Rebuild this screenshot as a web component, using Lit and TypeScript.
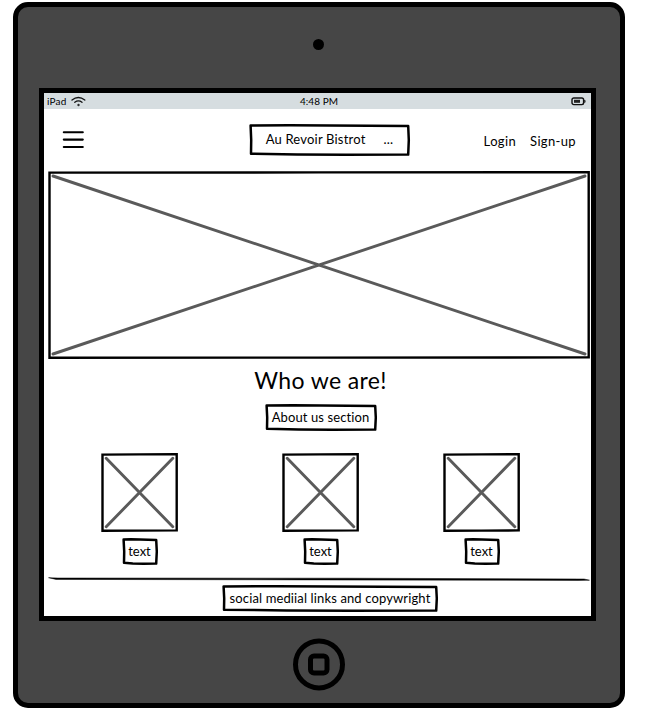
import { LitElement, html, svg, css } from "lit";
import { customElement, property } from "lit/decorators.js";

/** Text inside a hand-drawn, slightly crooked frame. */
@customElement("sketch-label")
class SketchLabel extends LitElement {
  @property({ type: Number }) w = 100;
  @property({ type: Number }) h = 26;

  static styles = css`
    :host { display: block; position: relative; }
    .frame { position: absolute; left: 0; top: 0; display: block; overflow: visible; }
    .content {
      position: relative; display: flex; height: 100%; box-sizing: border-box;
      align-items: center; justify-content: center; padding-bottom: 2px;
    }
  `;

  render() {
    const { w, h } = this;
    const outline = `M1.6 1.6 L${w * 0.25} 1.2 L${w * 0.5} 1.5 L${w - 1.8} 2
      L${w - 1.2} ${h * 0.5} L${w - 1.8} ${h - 1.4}
      L${w * 0.6} ${h - 1.2} L${w * 0.3} ${h - 1.6} L2 ${h - 2.2}
      L2.2 ${h * 0.5} Z`;
    return html`
      <svg class="frame" width=${w} height=${h}>
        <path d=${outline} fill="#fff" stroke="#000" stroke-width="2.5" stroke-linejoin="round" />
      </svg>
      <div class="content"><slot></slot></div>
    `;
  }
}

/** Crossed-out image placeholder. */
@customElement("image-placeholder")
class ImagePlaceholder extends LitElement {
  @property({ type: Number }) w = 77;
  @property({ type: Number }) h = 78;
  @property({ type: Number }) inset = 5;

  static styles = css`
    :host { display: block; }
    svg { display: block; }
  `;

  render() {
    const { w, h, inset: i } = this;
    return html`
      <svg width=${w} height=${h}>
        ${svg`
          <path d=${`M1.5 1.6 L${w * 0.5} 1.4 L${w - 1.3} 1.2 L${w - 1.3} ${h - 1.6} L${w * 0.5} ${h - 1.4} L1.5 ${h - 1.2} Z`}
            fill="#fff" stroke="#000" stroke-width="2.4" stroke-linejoin="miter" />
          <path d=${`M${i} ${i} L${w - i} ${h - i} M${w - i} ${i} L${i} ${h - i}`}
            fill="none" stroke="#5a5a5a" stroke-width="2.9" stroke-linecap="round" />
        `}
      </svg>
    `;
  }
}

@customElement("app-root")
class AppRoot extends LitElement {
  static styles = css`
    :host {
      display: block; width: 646px; height: 722px; overflow: hidden; background: #fff;
      color: #000; font-family: Lato, "Noto Sans", sans-serif; font-size: 13px; line-height: 16px;
      white-space: nowrap; font-variant-ligatures: none;
    }
    * { box-sizing: border-box; }
    svg { display: block; }
    .device {
      width: 612px; height: 706px; margin: 2px 0 0 13px; background: #464646;
      border: 5px solid #000; border-radius: 15px;
      display: flex; flex-direction: column; align-items: center;
    }
    .camera { width: 11px; height: 11px; border-radius: 50%; background: #000; margin: 32px 1px 38px 0; flex: none; }
    .screen {
      width: 557px; height: 533px; background: #fff; border: 5px solid #000; flex: none;
      margin-right: 3px; display: flex; flex-direction: column;
    }
    .status {
      height: 16px; background: #d6dde0; display: grid; grid-template-columns: 1fr auto 1fr;
      align-items: center; font-size: 10px; line-height: 14px; padding: 0 5px 0 3px; flex: none;
    }
    .carrier { display: flex; align-items: center; gap: 4px; }
    .carrier span, .time { padding-bottom: 1px; }
    .carrier span { letter-spacing: 0.2px; }
    .time { letter-spacing: 0.05px; margin-left: 5px; }
    .battery { justify-self: end; }
    .header {
      height: 62px; flex: none; display: grid; grid-template-columns: 1fr auto 1fr;
      padding: 0 15px 0 18px;
    }
    .menu { margin-top: 21px; }
    .brand { width: 161px; height: 32px; margin: 15px 0 0 21px; }
    .brand span { letter-spacing: 0.2px; }
    .dots { margin-left: 18px; }
    .links { justify-self: end; display: flex; gap: 14px; margin-top: 24px; }
    .login, .signup { letter-spacing: 0.35px; }
    .hero { margin-left: 4px; flex: none; }
    .about { display: flex; flex-direction: column; align-items: center; padding-left: 6px; height: 94px; flex: none; }
    h1 { font: inherit; font-size: 23px; line-height: 30px; margin: 6px 0 9px; letter-spacing: 0.35px; }
    .about-label { width: 112px; height: 27px; letter-spacing: 0.1px; }
    .cards { display: flex; padding-left: 57px; height: 124px; flex: none; }
    .card { width: 77px; display: flex; flex-direction: column; align-items: center; gap: 6px; }
    .card:nth-child(1) { margin-right: 104px; }
    .card:nth-child(2) { margin-right: 84px; }
    .card sketch-label { width: 36px; height: 27px; }
    .rule { margin-left: 4px; flex: none; }
    .footer { display: flex; justify-content: center; padding: 3px 0 0 25px; }
    .footer sketch-label { width: 216px; height: 27px; }
    .footer span { letter-spacing: 0.13px; }
    .home { margin-top: 17px; flex: none; }
  `;

  render() {
    return html`
      <div class="device">
        <div class="camera"></div>
        <main class="screen">
          <div class="status">
            <div class="carrier">
              <span>iPad</span>
              <svg width="15" height="11" fill="none" stroke="#111" stroke-width="1.3" stroke-linecap="round">
                <path d="M1 4 Q7.3 -1 13.8 4" />
                <path d="M3.8 6.3 Q7.4 3.6 11 6.3" />
                <circle cx="7.4" cy="9" r="0.8" fill="#111" stroke-width="0.6" />
              </svg>
            </div>
            <div class="time">4:48 PM</div>
            <svg class="battery" width="15" height="9">
              <rect x="1" y="1" width="11.6" height="6.6" rx="1.8" fill="none" stroke="#111" stroke-width="1.4" />
              <rect x="3" y="2.8" width="6" height="3" fill="#222" />
              <path d="M13.5 3 Q14.4 4.2 13.5 5.6" fill="none" stroke="#111" stroke-width="1.2" />
            </svg>
          </div>

          <header class="header">
            <svg class="menu" width="22" height="20" stroke="#000" stroke-width="2.1" stroke-linecap="round">
              <path d="M1.8 2.3 H20.8 M1.8 9.6 H20.8 M1.8 17 H20.8" />
            </svg>
            <sketch-label class="brand" w="161" h="32">
              <span>Au Revoir Bistrot</span><span class="dots">...</span>
            </sketch-label>
            <nav class="links"><span class="login">Login</span><span class="signup">Sign-up</span></nav>
          </header>

          <image-placeholder class="hero" w="542" h="188" inset="5"></image-placeholder>

          <section class="about">
            <h1>Who we are!</h1>
            <sketch-label class="about-label" w="112" h="27"><span>About us section</span></sketch-label>
          </section>

          <section class="cards">
            ${[0, 1, 2].map(() => html`
              <div class="card">
                <image-placeholder w="77" h="79" inset="5.2"></image-placeholder>
                <sketch-label w="36" h="27"><span>text</span></sketch-label>
              </div>
            `)}
          </section>

          <svg class="rule" width="543" height="5">
            <path d="M0.5 0.7 L10 1 L300 1.2 L536 2 L541.5 3.2 L530 3.4 L260 2.9 L8 2.4 Z" fill="#000" stroke="#000" stroke-width="0.5" />
          </svg>

          <footer class="footer">
            <sketch-label w="216" h="27"><span>social mediial links and copywright</span></sketch-label>
          </footer>
        </main>
        <svg class="home" width="52" height="53" fill="none" stroke="#000" stroke-width="5">
          <circle cx="26" cy="26.4" r="23.5" />
          <rect x="17.5" y="18" width="16.5" height="17" rx="3.5" />
        </svg>
      </div>
    `;
  }
}
